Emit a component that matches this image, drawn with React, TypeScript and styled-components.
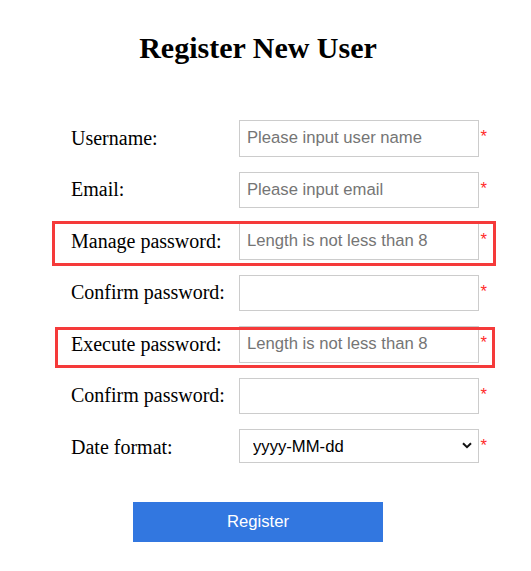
import React from "react";
import styled, { createGlobalStyle, css } from "styled-components";

const Global = createGlobalStyle`
  html, body { margin: 0; padding: 0; background: #fff; }
  body { font-family: "Liberation Serif", "Times New Roman", serif; color: #000; }
`;

const Page = styled.div`
  width: 516px;
`;

const Title = styled.h1`
  margin: 31px 0 0;
  font-family: "Liberation Serif", "Times New Roman", serif;
  font-size: 30px;
  line-height: 34.5px;
  font-weight: bold;
  text-align: center;
`;

const Form = styled.form`
  margin: 54.5px 0 0 71px;
  display: flex;
  flex-direction: column;
  gap: 15px;
`;

type Mark = { t: number; r: number; b: number; l: number };

const Row = styled.div<{ $mark?: Mark }>`
  position: relative;
  display: grid;
  grid-template-columns: 168px 240px auto;
  align-items: center;
  height: 36.5px;
  width: 416px;
  ${(p) =>
    p.$mark &&
    css`
      &::after {
        content: "";
        position: absolute;
        top: ${p.$mark.t}px;
        right: ${p.$mark.r}px;
        bottom: ${p.$mark.b}px;
        left: ${p.$mark.l}px;
        border: 3px solid #f53a3a;
        pointer-events: none;
      }
    `}
`;

const Label = styled.label`
  font-size: 20px;
  line-height: 23px;
  white-space: nowrap;
`;

const Input = styled.input`
  box-sizing: border-box;
  width: 240px;
  height: 36.5px;
  margin: 0;
  padding: 0 0 0 7px;
  border: 1px solid #cccccc;
  border-radius: 0;
  outline: none;
  font-family: "Liberation Sans", Arial, sans-serif;
  font-size: 16.67px;
  color: #000;
  &::placeholder {
    color: #757575;
  }
`;

const SelectWrap = styled.div`
  position: relative;
  align-self: start;
  width: 240px;
  height: 34px;
`;

const Select = styled.select`
  box-sizing: border-box;
  appearance: none;
  -webkit-appearance: none;
  width: 240px;
  height: 34px;
  margin: 0;
  padding: 0 0 0 13px;
  border: 1px solid #cccccc;
  border-radius: 0;
  background: #fff;
  font-family: "Liberation Sans", Arial, sans-serif;
  font-size: 16.67px;
  color: #000;
`;

const Chevron = styled.svg`
  position: absolute;
  right: 7px;
  top: 13px;
  width: 10px;
  height: 7px;
  pointer-events: none;
`;

const Required = styled.span`
  align-self: start;
  margin: 7px 0 0 1.5px;
  font-family: "Liberation Sans", Arial, sans-serif;
  font-size: 16.67px;
  line-height: 19px;
  color: #ff2a2a;
`;

const Footer = styled.div`
  display: flex;
  justify-content: center;
  margin-top: 36.5px;
`;

const Button = styled.button`
  width: 250px;
  height: 40px;
  border: none;
  border-radius: 0;
  background: #3277e0;
  color: #fff;
  font-family: "Liberation Sans", Arial, sans-serif;
  font-size: 16.67px;
  cursor: pointer;
`;

type Field = {
  label: string;
  placeholder?: string;
  type?: string;
  mark?: Mark;
};

const fields: Field[] = [
  { label: "Username:", placeholder: "Please input user name" },
  { label: "Email:", placeholder: "Please input email" },
  {
    label: "Manage password:",
    placeholder: "Length is not less than 8",
    type: "password",
    mark: { t: -2, r: -9, b: -6, l: -19 },
  },
  { label: "Confirm password:", type: "password" },
  {
    label: "Execute password:",
    placeholder: "Length is not less than 8",
    type: "password",
    mark: { t: 0.5, r: -8, b: -5.5, l: -16 },
  },
  { label: "Confirm password:", type: "password" },
];

export default function App() {
  return (
    <Page>
      <Global />
      <Title>Register New User</Title>
      <Form onSubmit={(e) => e.preventDefault()}>
        {fields.map((f, i) => (
          <Row key={i} $mark={f.mark}>
            <Label>{f.label}</Label>
            <Input type={f.type ?? "text"} placeholder={f.placeholder} />
            <Required>*</Required>
          </Row>
        ))}
        <Row>
          <Label>Date format:</Label>
          <SelectWrap>
            <Select defaultValue="yyyy-MM-dd">
              <option value="yyyy-MM-dd">yyyy-MM-dd</option>
              <option value="dd/MM/yyyy">dd/MM/yyyy</option>
              <option value="MM/dd/yyyy">MM/dd/yyyy</option>
            </Select>
            <Chevron viewBox="0 0 10 7" aria-hidden="true">
              <path d="M1 1.2 L5 5.2 L9 1.2" fill="none" stroke="#111" strokeWidth="2" />
            </Chevron>
          </SelectWrap>
          <Required>*</Required>
        </Row>
      </Form>
      <Footer>
        <Button type="button">Register</Button>
      </Footer>
    </Page>
  );
}
